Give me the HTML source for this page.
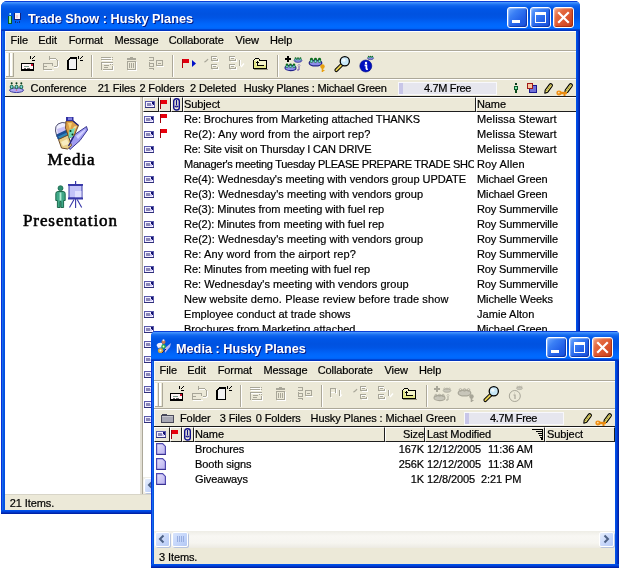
<!DOCTYPE html><html><head><meta charset="utf-8"><style>
*{margin:0;padding:0;box-sizing:border-box}
html,body{width:620px;height:569px;overflow:hidden;background:#fff}
body{will-change:transform;position:relative;font-family:"Liberation Sans",sans-serif;font-size:11px;color:#000}
.a{position:absolute}
svg{position:absolute;overflow:visible}
.t{position:absolute;white-space:pre;line-height:13px;font-size:11px;letter-spacing:-0.1px;-webkit-text-stroke:0.2px #000}
.win{position:absolute;overflow:hidden}
.tb{position:absolute;left:0;top:0;right:0;height:30px;background:linear-gradient(180deg,#0A3FD8 0px,#0A3FD8 1px,#4A9BFF 1px,#3A8CFC 2px,#2277F4 3px,#0C62EC 5px,#0056E6 8px,#0052E0 13px,#0055E5 17px,#005EF2 20px,#0066FB 23px,#006AFF 26px,#0064F8 27.5px,#0046D4 28.5px,#0034C0 29.5px,#0A3ACD 30px)}
.ttl{position:absolute;top:11px;font-weight:bold;font-size:12.7px;color:#fff;white-space:pre;line-height:15px;text-shadow:1px 1px #0A1A80;letter-spacing:0px}
.cl{position:absolute;background:#ECE9D8;overflow:hidden}
.btn{position:absolute;top:6px;width:21px;height:21px;border:1px solid #fff;border-radius:3px;
 background:linear-gradient(135deg,#6FA8FF 0%,#3A7FF5 30%,#2260E8 65%,#1A4FD6 100%);box-shadow:inset -1px -1px 1px rgba(0,20,120,.5),inset 1px 1px 1px rgba(255,255,255,.35)}
.btn.x{background:linear-gradient(135deg,#F3A78A 0%,#E4693F 30%,#D9512A 65%,#C5401C 100%);box-shadow:inset -1px -1px 1px rgba(120,20,0,.5),inset 1px 1px 1px rgba(255,255,255,.35)}
.hdr{position:absolute;height:15px;background:#ECE9D8;border-top:1px solid #fff;border-left:1px solid #fff;border-right:1px solid #1E1E1E;border-bottom:1px solid #1E1E1E}
.grip{position:absolute;width:3px;height:24px;border-left:2px solid #fff;border-right:1px solid #ACA899;border-bottom:1px solid #ACA899}
.sep{position:absolute;width:2px;height:23px;border-left:1px solid #ACA899;border-right:1px solid #fff}
.serif{position:absolute;font-family:"Liberation Serif",serif;font-size:17px;line-height:20px;white-space:pre;letter-spacing:0.9px;-webkit-text-stroke:0.55px #000}
</style></head><body>
<div class="win" style="left:1px;top:1px;width:579px;height:513px;border-radius:6px 5px 0 0;background:#0A3ACD">
<div class="tb"></div>
<div class="a" style="left:0;top:30px;bottom:0;width:4px;background:linear-gradient(90deg,#0831D9 0,#0831D9 1px,#166AEE 1px,#166AEE 2px,#0855DD 2px,#0855DD 3px,#0050E8 3px)"></div>
<div class="a" style="right:0;top:30px;bottom:0;width:4px;background:linear-gradient(270deg,#0022A8 0,#0022A8 1px,#0034C4 1px,#0034C4 2px,#0044DC 2px,#0044DC 3px,#0050E8 3px)"></div>
<div class="a" style="left:0;right:0;bottom:0;height:4px;background:linear-gradient(0deg,#0022A8 0,#0022A8 1px,#0034C4 1px,#0034C4 2px,#0044DC 2px,#0044DC 3px,#0050E8 3px)"></div>
<div class="ttl" style="left:27px">Trade Show : Husky Planes</div>
<div class="btn x" style="left:552px"></div>
<svg style="left:552px;top:6px" width="21" height="21" viewBox="0 0 21 21"><path d="M6 6 L15 15 M15 6 L6 15" stroke="#fff" stroke-width="2.2" stroke-linecap="square"/></svg>
<div class="btn" style="left:529px"></div>
<div class="a" style="left:534px;top:11px;width:11px;height:11px;background:transparent;border:1px solid #fff;border-top:3px solid #fff"></div>
<div class="btn" style="left:506px"></div>
<div class="a" style="left:511px;top:19px;width:8px;height:3px;background:#fff;"></div>
</div>
<svg style="left:7px;top:12px" width="16" height="13" viewBox="0 0 16 13" shape-rendering="crispEdges"><rect x="3" y="1" width="1" height="2" fill="#A8F4FF"/><rect x="2" y="1" width="1" height="2" fill="#5AB8E0"/><rect x="1" y="4" width="4" height="8" fill="#0A5A20"/><rect x="2" y="4" width="2" height="7" fill="#86E4A0"/><rect x="7" y="1" width="7" height="7" fill="#14207A"/><rect x="8" y="1" width="5" height="6" fill="#F8F0F8"/><rect x="9" y="3" width="2" height="3" fill="#F0D0E0"/><rect x="8" y="9" width="1" height="2" fill="#10307A"/><rect x="10" y="10" width="1" height="1" fill="#10307A"/><rect x="12" y="9" width="1" height="2" fill="#10307A"/></svg>
<div class="a" style="left:5px;top:31px;width:571px;height:479px;background:#ECE9D8;"></div>
<div class="a" style="left:5px;top:31px;width:571px;height:1px;background:#FFFFFF;"></div>
<div class="a" style="left:5px;top:31px;width:1px;height:479px;background:#F4F8FF;"></div>
<div class="t" style="left:10.6px;top:34px;">File</div>
<div class="t" style="left:38.3px;top:34px;">Edit</div>
<div class="t" style="left:68.7px;top:34px;">Format</div>
<div class="t" style="left:114.5px;top:34px;">Message</div>
<div class="t" style="left:168.7px;top:34px;">Collaborate</div>
<div class="t" style="left:235.5px;top:34px;">View</div>
<div class="t" style="left:270px;top:34px;">Help</div>
<div class="a" style="left:5px;top:50px;width:571px;height:1px;background:#ACA899;"></div>
<div class="a" style="left:5px;top:51px;width:571px;height:1px;background:#FFFFFF;"></div>
<div class="a" style="left:6px;top:53px;width:2px;height:24px;background:#FFFFFF;"></div>
<div class="a" style="left:9px;top:53px;width:1px;height:24px;background:#ACA899;"></div>
<div class="a" style="left:6px;top:76px;width:4px;height:1px;background:#ACA899;"></div>
<div class="a" style="left:10px;top:53px;width:2px;height:24px;background:#FFFFFF;"></div>
<div class="a" style="left:13px;top:53px;width:1px;height:24px;background:#ACA899;"></div>
<div class="a" style="left:10px;top:76px;width:4px;height:1px;background:#ACA899;"></div>
<div class="a" style="left:91px;top:55px;width:1px;height:22px;background:#ACA899;"></div>
<div class="a" style="left:92px;top:55px;width:1px;height:22px;background:#FFFFFF;"></div>
<div class="a" style="left:172px;top:55px;width:1px;height:22px;background:#ACA899;"></div>
<div class="a" style="left:173px;top:55px;width:1px;height:22px;background:#FFFFFF;"></div>
<div class="a" style="left:277px;top:55px;width:1px;height:22px;background:#ACA899;"></div>
<div class="a" style="left:278px;top:55px;width:1px;height:22px;background:#FFFFFF;"></div>
<div class="a" style="left:5px;top:78px;width:571px;height:1px;background:#ACA899;"></div>
<div class="a" style="left:5px;top:79px;width:571px;height:1px;background:#FFFFFF;"></div>
<div class="a" style="left:5px;top:96px;width:571px;height:1px;background:#1A1A1A;"></div>
<svg style="left:21px;top:55px" width="16" height="17" viewBox="0 0 16 17" shape-rendering="crispEdges"><rect x="0" y="8" width="13" height="8" fill="#000"/><rect x="1" y="9" width="11" height="5" fill="#FFF6F6"/><rect x="3" y="11" width="5" height="1" fill="#7A9A8A"/><rect x="3" y="13" width="2" height="1" fill="#666"/><rect x="6" y="13" width="3" height="1" fill="#666"/><rect x="10" y="9" width="2" height="2" fill="#D01030"/><rect x="9" y="1" width="1" height="3" fill="#000"/><rect x="11" y="3" width="1" height="1" fill="#000"/><rect x="12" y="2" width="1" height="1" fill="#000"/><rect x="13" y="1" width="1" height="1" fill="#000"/><rect x="11" y="5" width="3" height="1" fill="#000"/></svg>
<svg style="left:42px;top:55px" width="17" height="16" viewBox="0 0 17 16" shape-rendering="crispEdges"><rect x="1" y="8" width="10" height="1" fill="#A8A698"/><rect x="1" y="8" width="1" height="7" fill="#A8A698"/><rect x="10" y="9" width="1" height="2" fill="#A8A698"/><rect x="2" y="11" width="3" height="1" fill="#A8A698"/><rect x="1" y="14" width="9" height="1" fill="#A8A698"/><rect x="2" y="15" width="10" height="1" fill="#FFFFFF"/><rect x="7" y="1" width="1" height="4" fill="#A8A698"/><rect x="8" y="3" width="6" height="1" fill="#A8A698"/><rect x="8" y="4" width="6" height="1" fill="#FFFFFF"/><rect x="14" y="4" width="1" height="1" fill="#A8A698"/><rect x="15" y="5" width="1" height="6" fill="#A8A698"/><rect x="12" y="11" width="3" height="1" fill="#A8A698"/><rect x="16" y="6" width="1" height="6" fill="#FFFFFF"/><rect x="12" y="12" width="4" height="1" fill="#FFFFFF"/></svg>
<svg style="left:66px;top:55px" width="18" height="16" viewBox="0 0 18 16" shape-rendering="crispEdges"><path d="M1 5 L4 2 L11 2 L11 15 L1 15 Z" fill="#000"/><path d="M2.5 5.5 L4.5 3.5 L9.5 3.5 L9.5 13.5 L2.5 13.5 Z" fill="#F2F2F2"/><rect x="12" y="1" width="1" height="3" fill="#000"/><rect x="14" y="3" width="1" height="1" fill="#000"/><rect x="15" y="2" width="1" height="1" fill="#000"/><rect x="16" y="1" width="1" height="1" fill="#000"/><rect x="14" y="5" width="3" height="1" fill="#000"/></svg>
<svg style="left:100px;top:56px" width="15" height="16" viewBox="0 0 15 16" shape-rendering="crispEdges"><rect x="1" y="1" width="10" height="1" fill="#A8A698"/><rect x="2" y="2" width="10" height="1" fill="#FFFFFF"/><rect x="12" y="1" width="1" height="1" fill="#A8A698"/><rect x="1" y="3" width="10" height="1" fill="#A8A698"/><rect x="2" y="4" width="10" height="1" fill="#FFFFFF"/><rect x="12" y="3" width="1" height="1" fill="#A8A698"/><rect x="1" y="6" width="12" height="1" fill="#A8A698"/><rect x="1" y="6" width="1" height="8" fill="#A8A698"/><rect x="2" y="7" width="11" height="1" fill="#FFFFFF"/><rect x="3" y="13" width="10" height="1" fill="#A8A698"/><rect x="12" y="10" width="1" height="4" fill="#A8A698"/><rect x="10" y="8" width="1" height="1" fill="#A8A698"/><rect x="12" y="8" width="1" height="1" fill="#A8A698"/><rect x="4" y="9" width="5" height="1" fill="#A8A698"/><rect x="4" y="11" width="4" height="1" fill="#A8A698"/><rect x="3" y="14" width="11" height="1" fill="#FFFFFF"/><rect x="13" y="10" width="1" height="4" fill="#FFFFFF"/></svg>
<svg style="left:126px;top:56px" width="12" height="16" viewBox="0 0 12 16" shape-rendering="crispEdges"><rect x="4" y="1" width="3" height="1" fill="#A8A698"/><rect x="1" y="2" width="9" height="2" fill="#A8A698"/><rect x="1" y="5" width="9" height="1" fill="#A8A698"/><rect x="1" y="5" width="1" height="9" fill="#A8A698"/><rect x="9" y="5" width="1" height="9" fill="#A8A698"/><rect x="1" y="13" width="9" height="1" fill="#A8A698"/><rect x="3" y="7" width="1" height="5" fill="#A8A698"/><rect x="5" y="7" width="1" height="5" fill="#A8A698"/><rect x="7" y="7" width="1" height="5" fill="#A8A698"/><rect x="2" y="14" width="9" height="1" fill="#FFFFFF"/><rect x="10" y="6" width="1" height="8" fill="#FFFFFF"/></svg>
<svg style="left:148px;top:56px" width="17" height="16" viewBox="0 0 17 16" shape-rendering="crispEdges"><rect x="1" y="1" width="5" height="1" fill="#A8A698"/><rect x="5" y="2" width="1" height="2" fill="#A8A698"/><rect x="1" y="4" width="5" height="1" fill="#A8A698"/><rect x="1" y="6" width="1" height="5" fill="#A8A698"/><rect x="1" y="7" width="5" height="1" fill="#A8A698"/><rect x="5" y="8" width="1" height="2" fill="#A8A698"/><rect x="1" y="10" width="5" height="1" fill="#A8A698"/><rect x="1" y="12" width="5" height="1" fill="#A8A698"/><rect x="5" y="13" width="1" height="1" fill="#A8A698"/><rect x="8" y="4" width="7" height="6" fill="#A8A698"/><rect x="9" y="5" width="5" height="4" fill="#ECE9D8"/><rect x="10" y="7" width="3" height="1" fill="#A8A698"/><rect x="9" y="10" width="7" height="1" fill="#FFFFFF"/></svg>
<svg style="left:181px;top:58px" width="17" height="11" viewBox="0 0 17 11" shape-rendering="crispEdges"><rect x="1" y="1" width="7" height="4" fill="#E00010"/><rect x="1" y="1" width="1" height="9" fill="#B0000C"/><path d="M11 2 L15 5.5 L11 9 Z" fill="#0010C8" shape-rendering="auto"/></svg>
<svg style="left:203px;top:55px" width="17" height="16" viewBox="0 0 17 16" shape-rendering="crispEdges"><rect x="8" y="1" width="6" height="1" fill="#A8A698"/><rect x="8" y="1" width="1" height="5" fill="#A8A698"/><rect x="10" y="3" width="3" height="1" fill="#A8A698"/><rect x="9" y="5" width="6" height="1" fill="#A8A698"/><rect x="14" y="4" width="1" height="2" fill="#A8A698"/><rect x="9" y="2" width="5" height="1" fill="#FFFFFF"/><rect x="10" y="6" width="6" height="1" fill="#FFFFFF"/><rect x="15" y="4" width="1" height="3" fill="#FFFFFF"/><rect x="8" y="9" width="6" height="1" fill="#A8A698"/><rect x="8" y="9" width="1" height="5" fill="#A8A698"/><rect x="10" y="11" width="3" height="1" fill="#A8A698"/><rect x="9" y="13" width="6" height="1" fill="#A8A698"/><rect x="14" y="12" width="1" height="2" fill="#A8A698"/><rect x="9" y="10" width="5" height="1" fill="#FFFFFF"/><rect x="10" y="14" width="6" height="1" fill="#FFFFFF"/><rect x="15" y="12" width="1" height="3" fill="#FFFFFF"/><path d="M1.5 7 Q3.5 6.5 5 4" stroke="#A8A698" stroke-width="1.3" fill="none" shape-rendering="auto"/></svg>
<svg style="left:228px;top:55px" width="17" height="16" viewBox="0 0 17 16" shape-rendering="crispEdges"><rect x="1" y="1" width="6" height="1" fill="#A8A698"/><rect x="1" y="1" width="1" height="5" fill="#A8A698"/><rect x="3" y="3" width="3" height="1" fill="#A8A698"/><rect x="2" y="5" width="6" height="1" fill="#A8A698"/><rect x="7" y="4" width="1" height="2" fill="#A8A698"/><rect x="2" y="2" width="5" height="1" fill="#FFFFFF"/><rect x="3" y="6" width="6" height="1" fill="#FFFFFF"/><rect x="8" y="4" width="1" height="3" fill="#FFFFFF"/><rect x="1" y="9" width="6" height="1" fill="#A8A698"/><rect x="1" y="9" width="1" height="5" fill="#A8A698"/><rect x="3" y="11" width="3" height="1" fill="#A8A698"/><rect x="2" y="13" width="6" height="1" fill="#A8A698"/><rect x="7" y="12" width="1" height="2" fill="#A8A698"/><rect x="2" y="10" width="5" height="1" fill="#FFFFFF"/><rect x="3" y="14" width="6" height="1" fill="#FFFFFF"/><rect x="8" y="12" width="1" height="3" fill="#FFFFFF"/><rect x="11" y="5" width="1" height="6" fill="#A8A698"/><rect x="12" y="5" width="1" height="6" fill="#FFFFFF"/><path d="M13 12 L16 8.5" stroke="#FFFFFF" stroke-width="1.3" shape-rendering="auto"/></svg>
<svg style="left:252px;top:57px" width="17" height="13" viewBox="0 0 17 13" shape-rendering="crispEdges"><path d="M1 3 L3 1 L7 1 L8 3 L15 3 L15 12 L1 12 Z" fill="#000"/><path d="M2 3.6 L3.5 2 L6.5 2 L7.5 4 L14 4 L14 11 L2 11 Z" fill="#F4F4C8"/><rect x="2" y="8" width="12" height="3" fill="#E4E88A"/><rect x="2" y="4" width="2" height="7" fill="#E4E88A"/><rect x="5" y="4" width="1" height="5" fill="#000"/><rect x="4" y="5" width="3" height="1" fill="#000"/><rect x="5" y="8" width="7" height="1" fill="#000"/><rect x="2" y="12" width="14" height="1" fill="#55553A" opacity=".6"/></svg>
<svg style="left:285px;top:56px" width="18" height="16" viewBox="0 0 18 16"><rect x="2" y="0" width="2" height="6" fill="#000" shape-rendering="crispEdges"/><rect x="0" y="2" width="6" height="2" fill="#000" shape-rendering="crispEdges"/><ellipse cx="13" cy="4.5" rx="3.8499999999999996" ry="1.8199999999999998" fill="#8C8CE8" stroke="#23238C" stroke-width="0.77"/><circle cx="10.55" cy="2.2600000000000002" r="0.9099999999999999" fill="#0B6B1A"/><circle cx="10.55" cy="3.38" r="0.84" fill="#7CD8E8" stroke="#0B6B1A" stroke-width="0.42"/><circle cx="13.0" cy="2.2600000000000002" r="0.9099999999999999" fill="#0B6B1A"/><circle cx="13.0" cy="3.38" r="0.84" fill="#7CD8E8" stroke="#0B6B1A" stroke-width="0.42"/><circle cx="15.45" cy="2.2600000000000002" r="0.9099999999999999" fill="#0B6B1A"/><circle cx="15.45" cy="3.38" r="0.84" fill="#7CD8E8" stroke="#0B6B1A" stroke-width="0.42"/><ellipse cx="5.5" cy="12" rx="5.5" ry="2.6" fill="#8C8CE8" stroke="#23238C" stroke-width="1.1"/><circle cx="2.0" cy="8.8" r="1.3" fill="#0B6B1A"/><circle cx="2.0" cy="10.4" r="1.2" fill="#7CD8E8" stroke="#0B6B1A" stroke-width="0.6"/><circle cx="5.5" cy="8.8" r="1.3" fill="#0B6B1A"/><circle cx="5.5" cy="10.4" r="1.2" fill="#7CD8E8" stroke="#0B6B1A" stroke-width="0.6"/><circle cx="9.0" cy="8.8" r="1.3" fill="#0B6B1A"/><circle cx="9.0" cy="10.4" r="1.2" fill="#7CD8E8" stroke="#0B6B1A" stroke-width="0.6"/><path d="M12 14 L14 14 L14 10 M13 9.5 L14 8.5 L15 9.5" stroke="#7050B0" stroke-width="1" fill="none"/></svg>
<svg style="left:309px;top:56px" width="18" height="16" viewBox="0 0 18 16"><ellipse cx="6.5" cy="7" rx="6.324999999999999" ry="2.9899999999999998" fill="#8C8CE8" stroke="#23238C" stroke-width="1.265"/><circle cx="2.4750000000000005" cy="3.3200000000000003" r="1.4949999999999999" fill="#0B6B1A"/><circle cx="2.4750000000000005" cy="5.16" r="1.38" fill="#7CD8E8" stroke="#0B6B1A" stroke-width="0.69"/><circle cx="6.5" cy="3.3200000000000003" r="1.4949999999999999" fill="#0B6B1A"/><circle cx="6.5" cy="5.16" r="1.38" fill="#7CD8E8" stroke="#0B6B1A" stroke-width="0.69"/><circle cx="10.524999999999999" cy="3.3200000000000003" r="1.4949999999999999" fill="#0B6B1A"/><circle cx="10.524999999999999" cy="5.16" r="1.38" fill="#7CD8E8" stroke="#0B6B1A" stroke-width="0.69"/><circle cx="13.5" cy="10.5" r="2.2" fill="#E8A010"/><rect x="12.7" y="12" width="1.6" height="4" fill="#E8A010"/><rect x="14" y="14" width="1.5" height="1" fill="#E8A010"/></svg>
<svg style="left:334px;top:55px" width="17" height="17" viewBox="0 0 17 17"><path d="M2.3 15.2 L7.5 10" stroke="#000" stroke-width="3.8" stroke-linecap="round"/><path d="M2.3 15.2 L7.5 10" stroke="#E8D050" stroke-width="1.8" stroke-linecap="round"/><circle cx="10.8" cy="6.2" r="4.6" fill="#C8E8F8" stroke="#000" stroke-width="1.3"/><circle cx="9.8" cy="5.2" r="1.6" fill="#fff" opacity=".8"/></svg>
<svg style="left:359px;top:55px" width="17" height="17" viewBox="0 0 17 17"><circle cx="6.8" cy="11" r="6" fill="#0010C0" stroke="#000A80" stroke-width=".6"/><circle cx="7" cy="8" r="1.2" fill="#fff"/><path d="M5.6 10.4 L7.4 10.4 L7.4 13.6 Q7.6 14.4 8.8 14" stroke="#fff" stroke-width="1.7" fill="none"/><ellipse cx="11.5" cy="3.2" rx="3.0250000000000004" ry="1.4300000000000002" fill="#8C8CE8" stroke="#23238C" stroke-width="0.6050000000000001"/><circle cx="9.575" cy="1.44" r="0.7150000000000001" fill="#0B6B1A"/><circle cx="9.575" cy="2.3200000000000003" r="0.66" fill="#7CD8E8" stroke="#0B6B1A" stroke-width="0.33"/><circle cx="11.5" cy="1.44" r="0.7150000000000001" fill="#0B6B1A"/><circle cx="11.5" cy="2.3200000000000003" r="0.66" fill="#7CD8E8" stroke="#0B6B1A" stroke-width="0.33"/><circle cx="13.425" cy="1.44" r="0.7150000000000001" fill="#0B6B1A"/><circle cx="13.425" cy="2.3200000000000003" r="0.66" fill="#7CD8E8" stroke="#0B6B1A" stroke-width="0.33"/></svg>
<svg style="left:9px;top:82px" width="16" height="12" viewBox="0 0 16 12"><ellipse cx="7.5" cy="8.2" rx="7" ry="2.3" fill="#B0A8F4" stroke="#3A3AA0" stroke-width="1"/><circle cx="7.5" cy="8.2" r=".8" fill="#E06080"/><circle cx="2.7" cy="1.3" r="1" fill="#083818"/><ellipse cx="2.7" cy="4.9" rx="1.5" ry="1.8" fill="#7ED0E0" stroke="#0A5A2A" stroke-width=".9"/><circle cx="7.5" cy="1.3" r="1" fill="#083818"/><ellipse cx="7.5" cy="4.9" rx="1.5" ry="1.8" fill="#7ED0E0" stroke="#0A5A2A" stroke-width=".9"/><circle cx="12.3" cy="1.3" r="1" fill="#083818"/><ellipse cx="12.3" cy="4.9" rx="1.5" ry="1.8" fill="#7ED0E0" stroke="#0A5A2A" stroke-width=".9"/></svg>
<div class="t" style="left:30.6px;top:82px;">Conference</div>
<div class="t" style="left:97.7px;top:82px;">21 Files</div>
<div class="t" style="left:139.4px;top:82px;">2 Folders</div>
<div class="t" style="left:190px;top:82px;">2 Deleted</div>
<div class="t" style="left:243.8px;top:82px;letter-spacing:-0.18px">Husky Planes : Michael Green</div>
<div class="a" style="left:398px;top:82px;width:99px;height:13px;background:#E6E6EE;border:1px solid #F8F8FC"></div>
<div class="a" style="left:399px;top:83px;width:4px;height:11px;background:#C8C6E8;"></div>
<div class="t" style="left:424px;top:82px;letter-spacing:-0.35px">4.7M Free</div>
<svg style="left:514px;top:83px" width="6" height="11" viewBox="0 0 6 11" shape-rendering="crispEdges"><rect x="1" y="0" width="2" height="2" fill="#0A3A1A"/><rect x="0" y="3" width="4" height="4" fill="#0A5A2A"/><rect x="1" y="4" width="2" height="2" fill="#8AE8B0"/><rect x="1" y="7" width="2" height="3" fill="#0A4A1A"/></svg>
<svg style="left:527px;top:83px" width="12" height="11" viewBox="0 0 12 11" shape-rendering="crispEdges"><rect x="2" y="2" width="8" height="8" fill="#1A1A90"/><rect x="3" y="3" width="6" height="6" fill="#7070D8"/><rect x="0" y="0" width="6" height="6" fill="#A01818"/><rect x="1" y="1" width="4" height="4" fill="#F8C8A0"/></svg>
<svg style="left:544px;top:83px" width="9" height="11" viewBox="0 0 9 11"><path d="M0.8 10.2 L1.2 7 L5.6 1.2 Q6.6 0.2 7.6 1 L8.2 1.6 Q8.8 2.6 8 3.5 L3.8 9.2 Z" fill="#EEE070" stroke="#000" stroke-width="1.1" stroke-linejoin="round"/><path d="M2.6 7.6 L6.6 2.4" stroke="#303000" stroke-width=".8" stroke-dasharray="1 1"/></svg>
<svg style="left:556px;top:83px" width="17" height="13" viewBox="0 0 17 13"><path d="M8.8 10.2 L9.2 7 L13.6 1.2 Q14.6 0.2 15.6 1 L16.2 1.6 Q16.8 2.6 16 3.5 L11.8 9.2 Z" fill="#EEE070" stroke="#000" stroke-width="1.1" stroke-linejoin="round"/><path d="M10.6 7.6 L14.6 2.4" stroke="#303000" stroke-width=".8" stroke-dasharray="1 1"/><ellipse cx="3" cy="10" rx="2.6" ry="2.4" fill="#F09018"/><rect x="4" y="8.8" width="7" height="2.4" fill="#E88A10"/><rect x="7.5" y="10.5" width="2" height="2.5" fill="#E88A10"/><circle cx="2.8" cy="9.6" r=".9" fill="#FFE0A0"/></svg>
<div class="a" style="left:5px;top:97px;width:135px;height:397px;background:#FFFFFF;"></div>
<div class="a" style="left:140px;top:97px;width:2px;height:397px;background:#E2DFD4;"></div>
<div class="a" style="left:142px;top:97px;width:1px;height:397px;background:#ACA899;"></div>
<svg style="left:50px;top:112px" width="40" height="40" viewBox="50 112 40 40"><path d="M67.5 146 L74 135 L86.5 126.5 L87.5 130 L80 140.5 L70 149.5 Z" fill="#A09CF2" stroke="#3A3890" stroke-width="1"/><path d="M76 136 L85.5 129 L85 131 L78 139 Z" fill="#D0D0FF"/><path d="M55.5 131 Q55 126 58 124 Q62 121.5 66.5 123 L67 132 L57 137 Z" fill="#EEEEFF" stroke="#505070" stroke-width="1"/><path d="M57 129 L66 126 L66.5 131 L58 135 Z" fill="#C8C0F4"/><path d="M56.5 134.5 L67 129.5 L71 133 L60.5 140.5 L57.5 139 Z" fill="#1C4E94"/><path d="M58 136.5 L67 132.5 L68 134.5 L60 139 Z" fill="#2E86B8"/><path d="M58.5 139.5 L68 135 L71.5 145.5 L67.5 149 L61.5 148 Z" fill="#EAD08A" stroke="#6A4A28" stroke-width="1"/><path d="M61 142 L67 139 L69 144 L63 146 Z" fill="#F8ECC0"/><path d="M66 121 L73.5 121 L78.5 125.5 L74 136 L69 138 L65.5 128 Z" fill="#DDA048" stroke="#5A3810" stroke-width=".8"/><path d="M68 123 L72 123 L70 130 Z" fill="#F8D070"/><path d="M74 126.5 L77 126 L73 133 L71 132 Z" fill="#F0E0A0"/><path d="M69 130 L75 128 L73 137 L68.5 138 Z" fill="#70D8B8"/><circle cx="70.5" cy="131" r="1" fill="#0A3A10"/><circle cx="72.5" cy="134.5" r="1" fill="#0A3A10"/><path d="M73 121 L78.5 125.5 M74 136 L68.5 146" stroke="#20207A" stroke-width="1.3" fill="none"/><rect x="66" y="117" width="7.5" height="4" fill="#3030A0"/><rect x="68" y="117.5" width="4" height="2.5" fill="#8080E0"/></svg>
<div class="serif" style="left:47.5px;top:150px">Media</div>
<svg style="left:55px;top:181px" width="30" height="28" viewBox="0 0 30 28"><circle cx="5.5" cy="7.2" r="2.5" fill="#2E8E70" stroke="#0E5E40" stroke-width=".7"/><path d="M0.8 12.5 Q0.8 10.5 3 10.5 L8 10.5 Q10.2 10.5 10.2 12.5 L10.2 19.5 L8.6 19.5 L8.6 26.5 L5.9 26.5 L5.9 20.5 L5.1 20.5 L5.1 26.5 L2.4 26.5 L2.4 19.5 L0.8 19.5 Z" fill="#40A888" stroke="#0E5E40" stroke-width=".9"/><rect x="4.6" y="11.5" width="1.8" height="8" fill="#B0ECD8"/><rect x="20" y="0" width="1.2" height="3.5" fill="#3838A8"/><rect x="13" y="3" width="15" height="1.8" fill="#3838A8"/><rect x="14" y="4.5" width="13" height="12.5" fill="#C4C4F8" stroke="#3838A8" stroke-width="1"/><rect x="20" y="10" width="6.5" height="6.5" fill="#E8E8FF" opacity=".8"/><rect x="13" y="16.5" width="15" height="2" fill="#3838A8"/><path d="M20.6 18 L20.6 27 M19 18.5 L14.5 26.5 M22.2 18.5 L26.7 26.5" stroke="#3838A8" stroke-width="1.1"/></svg>
<div class="serif" style="left:23px;top:211px">Presentation</div>
<div class="a" style="left:143px;top:97px;width:433px;height:397px;background:#FFFFFF;"></div>
<div class="hdr" style="left:143px;top:97px;width:16px;"></div>
<div class="hdr" style="left:159px;top:97px;width:12px;"></div>
<div class="hdr" style="left:171px;top:97px;width:12px;"></div>
<div class="hdr" style="left:183px;top:97px;width:293px;"></div>
<div class="hdr" style="left:476px;top:97px;width:100px;border-right:none"></div>
<svg style="left:145px;top:101px" width="10" height="7" viewBox="0 0 10 7" shape-rendering="crispEdges"><rect x="0" y="0" width="10" height="7" fill="#5C5CAC"/><rect x="1" y="1" width="8" height="5" fill="#F4F0FF"/><rect x="2" y="2" width="4" height="3" fill="#8A88B8"/><rect x="6" y="3" width="2" height="2" fill="#C8C0F0"/><rect x="7" y="1" width="2" height="2" fill="#101070"/><rect x="8" y="3" width="1" height="1" fill="#101070"/><rect x="0" y="6" width="10" height="1" fill="#30307A"/></svg>
<svg style="left:160px;top:100px" width="7" height="9" viewBox="0 0 7 9" shape-rendering="crispEdges"><rect x="0" y="0" width="7" height="4" fill="#E8000C"/><rect x="0" y="0" width="1" height="9" fill="#A0000A"/></svg>
<svg style="left:173px;top:98px" width="8" height="13" viewBox="0 0 8 13"><rect x="0.7" y="0.7" width="5.6" height="11.3" rx="2.6" fill="none" stroke="#10108C" stroke-width="1.4"/><path d="M3.5 2 L3.5 7.5 M1.8 7.8 Q3.5 10 5.2 7.8" stroke="#10108C" stroke-width="1.2" fill="none"/></svg>
<div class="t" style="left:184px;top:98px;">Subject</div>
<div class="t" style="left:477px;top:98px;">Name</div>
<svg style="left:144px;top:116px" width="10" height="7" viewBox="0 0 10 7" shape-rendering="crispEdges"><rect x="0" y="0" width="10" height="7" fill="#5C5CAC"/><rect x="1" y="1" width="8" height="5" fill="#F4F0FF"/><rect x="2" y="2" width="4" height="3" fill="#8A88B8"/><rect x="6" y="3" width="2" height="2" fill="#C8C0F0"/><rect x="7" y="1" width="2" height="2" fill="#101070"/><rect x="8" y="3" width="1" height="1" fill="#101070"/><rect x="0" y="6" width="10" height="1" fill="#30307A"/></svg>
<svg style="left:160px;top:114px" width="7" height="9" viewBox="0 0 7 9" shape-rendering="crispEdges"><rect x="0" y="0" width="7" height="4" fill="#E8000C"/><rect x="0" y="0" width="1" height="9" fill="#A0000A"/></svg>
<div class="a" style="left:184px;top:111px;width:290px;height:15px;overflow:hidden">
<div class="t" style="left:0px;top:2px;letter-spacing:-0.08px">Re: Brochures from Marketing attached THANKS</div></div>
<div class="t" style="left:477px;top:113px;letter-spacing:0.14px">Melissa Stewart</div>
<svg style="left:144px;top:131px" width="10" height="7" viewBox="0 0 10 7" shape-rendering="crispEdges"><rect x="0" y="0" width="10" height="7" fill="#5C5CAC"/><rect x="1" y="1" width="8" height="5" fill="#F4F0FF"/><rect x="2" y="2" width="4" height="3" fill="#8A88B8"/><rect x="6" y="3" width="2" height="2" fill="#C8C0F0"/><rect x="7" y="1" width="2" height="2" fill="#101070"/><rect x="8" y="3" width="1" height="1" fill="#101070"/><rect x="0" y="6" width="10" height="1" fill="#30307A"/></svg>
<svg style="left:160px;top:129px" width="7" height="9" viewBox="0 0 7 9" shape-rendering="crispEdges"><rect x="0" y="0" width="7" height="4" fill="#E8000C"/><rect x="0" y="0" width="1" height="9" fill="#A0000A"/></svg>
<div class="a" style="left:184px;top:126px;width:290px;height:15px;overflow:hidden">
<div class="t" style="left:0px;top:2px;letter-spacing:0.13px">Re(2): Any word from the airport rep?</div></div>
<div class="t" style="left:477px;top:128px;letter-spacing:0.14px">Melissa Stewart</div>
<svg style="left:144px;top:146px" width="10" height="7" viewBox="0 0 10 7" shape-rendering="crispEdges"><rect x="0" y="0" width="10" height="7" fill="#5C5CAC"/><rect x="1" y="1" width="8" height="5" fill="#F4F0FF"/><rect x="2" y="2" width="4" height="3" fill="#8A88B8"/><rect x="6" y="3" width="2" height="2" fill="#C8C0F0"/><rect x="7" y="1" width="2" height="2" fill="#101070"/><rect x="8" y="3" width="1" height="1" fill="#101070"/><rect x="0" y="6" width="10" height="1" fill="#30307A"/></svg>
<div class="a" style="left:184px;top:141px;width:290px;height:15px;overflow:hidden">
<div class="t" style="left:0px;top:2px;letter-spacing:-0.18px">Re: Site visit on Thursday I CAN DRIVE</div></div>
<div class="t" style="left:477px;top:143px;letter-spacing:0.14px">Melissa Stewart</div>
<svg style="left:144px;top:161px" width="10" height="7" viewBox="0 0 10 7" shape-rendering="crispEdges"><rect x="0" y="0" width="10" height="7" fill="#5C5CAC"/><rect x="1" y="1" width="8" height="5" fill="#F4F0FF"/><rect x="2" y="2" width="4" height="3" fill="#8A88B8"/><rect x="6" y="3" width="2" height="2" fill="#C8C0F0"/><rect x="7" y="1" width="2" height="2" fill="#101070"/><rect x="8" y="3" width="1" height="1" fill="#101070"/><rect x="0" y="6" width="10" height="1" fill="#30307A"/></svg>
<div class="a" style="left:184px;top:156px;width:290px;height:15px;overflow:hidden">
<div class="t" style="left:0px;top:2px;letter-spacing:-0.27px">Manager&#x27;s meeting Tuesday PLEASE PREPARE TRADE SHOW</div></div>
<div class="t" style="left:477px;top:158px;letter-spacing:0.15px">Roy Allen</div>
<svg style="left:144px;top:176px" width="10" height="7" viewBox="0 0 10 7" shape-rendering="crispEdges"><rect x="0" y="0" width="10" height="7" fill="#5C5CAC"/><rect x="1" y="1" width="8" height="5" fill="#F4F0FF"/><rect x="2" y="2" width="4" height="3" fill="#8A88B8"/><rect x="6" y="3" width="2" height="2" fill="#C8C0F0"/><rect x="7" y="1" width="2" height="2" fill="#101070"/><rect x="8" y="3" width="1" height="1" fill="#101070"/><rect x="0" y="6" width="10" height="1" fill="#30307A"/></svg>
<div class="a" style="left:184px;top:171px;width:290px;height:15px;overflow:hidden">
<div class="t" style="left:0px;top:2px;letter-spacing:-0.04px">Re(4): Wednesday&#x27;s meeting with vendors group UPDATE</div></div>
<div class="t" style="left:477px;top:173px;letter-spacing:-0.08px">Michael Green</div>
<svg style="left:144px;top:191px" width="10" height="7" viewBox="0 0 10 7" shape-rendering="crispEdges"><rect x="0" y="0" width="10" height="7" fill="#5C5CAC"/><rect x="1" y="1" width="8" height="5" fill="#F4F0FF"/><rect x="2" y="2" width="4" height="3" fill="#8A88B8"/><rect x="6" y="3" width="2" height="2" fill="#C8C0F0"/><rect x="7" y="1" width="2" height="2" fill="#101070"/><rect x="8" y="3" width="1" height="1" fill="#101070"/><rect x="0" y="6" width="10" height="1" fill="#30307A"/></svg>
<div class="a" style="left:184px;top:186px;width:290px;height:15px;overflow:hidden">
<div class="t" style="left:0px;top:2px;letter-spacing:0.04px">Re(3): Wednesday&#x27;s meeting with vendors group</div></div>
<div class="t" style="left:477px;top:188px;letter-spacing:-0.08px">Michael Green</div>
<svg style="left:144px;top:206px" width="10" height="7" viewBox="0 0 10 7" shape-rendering="crispEdges"><rect x="0" y="0" width="10" height="7" fill="#5C5CAC"/><rect x="1" y="1" width="8" height="5" fill="#F4F0FF"/><rect x="2" y="2" width="4" height="3" fill="#8A88B8"/><rect x="6" y="3" width="2" height="2" fill="#C8C0F0"/><rect x="7" y="1" width="2" height="2" fill="#101070"/><rect x="8" y="3" width="1" height="1" fill="#101070"/><rect x="0" y="6" width="10" height="1" fill="#30307A"/></svg>
<div class="a" style="left:184px;top:201px;width:290px;height:15px;overflow:hidden">
<div class="t" style="left:0px;top:2px;letter-spacing:-0.04px">Re(3): Minutes from meeting with fuel rep</div></div>
<div class="t" style="left:477px;top:203px;letter-spacing:-0.15px">Roy Summerville</div>
<svg style="left:144px;top:221px" width="10" height="7" viewBox="0 0 10 7" shape-rendering="crispEdges"><rect x="0" y="0" width="10" height="7" fill="#5C5CAC"/><rect x="1" y="1" width="8" height="5" fill="#F4F0FF"/><rect x="2" y="2" width="4" height="3" fill="#8A88B8"/><rect x="6" y="3" width="2" height="2" fill="#C8C0F0"/><rect x="7" y="1" width="2" height="2" fill="#101070"/><rect x="8" y="3" width="1" height="1" fill="#101070"/><rect x="0" y="6" width="10" height="1" fill="#30307A"/></svg>
<div class="a" style="left:184px;top:216px;width:290px;height:15px;overflow:hidden">
<div class="t" style="left:0px;top:2px;letter-spacing:-0.04px">Re(2): Minutes from meeting with fuel rep</div></div>
<div class="t" style="left:477px;top:218px;letter-spacing:-0.15px">Roy Summerville</div>
<svg style="left:144px;top:236px" width="10" height="7" viewBox="0 0 10 7" shape-rendering="crispEdges"><rect x="0" y="0" width="10" height="7" fill="#5C5CAC"/><rect x="1" y="1" width="8" height="5" fill="#F4F0FF"/><rect x="2" y="2" width="4" height="3" fill="#8A88B8"/><rect x="6" y="3" width="2" height="2" fill="#C8C0F0"/><rect x="7" y="1" width="2" height="2" fill="#101070"/><rect x="8" y="3" width="1" height="1" fill="#101070"/><rect x="0" y="6" width="10" height="1" fill="#30307A"/></svg>
<div class="a" style="left:184px;top:231px;width:290px;height:15px;overflow:hidden">
<div class="t" style="left:0px;top:2px;letter-spacing:0.04px">Re(2): Wednesday&#x27;s meeting with vendors group</div></div>
<div class="t" style="left:477px;top:233px;letter-spacing:-0.15px">Roy Summerville</div>
<svg style="left:144px;top:251px" width="10" height="7" viewBox="0 0 10 7" shape-rendering="crispEdges"><rect x="0" y="0" width="10" height="7" fill="#5C5CAC"/><rect x="1" y="1" width="8" height="5" fill="#F4F0FF"/><rect x="2" y="2" width="4" height="3" fill="#8A88B8"/><rect x="6" y="3" width="2" height="2" fill="#C8C0F0"/><rect x="7" y="1" width="2" height="2" fill="#101070"/><rect x="8" y="3" width="1" height="1" fill="#101070"/><rect x="0" y="6" width="10" height="1" fill="#30307A"/></svg>
<div class="a" style="left:184px;top:246px;width:290px;height:15px;overflow:hidden">
<div class="t" style="left:0px;top:2px;letter-spacing:0.11px">Re: Any word from the airport rep?</div></div>
<div class="t" style="left:477px;top:248px;letter-spacing:-0.15px">Roy Summerville</div>
<svg style="left:144px;top:266px" width="10" height="7" viewBox="0 0 10 7" shape-rendering="crispEdges"><rect x="0" y="0" width="10" height="7" fill="#5C5CAC"/><rect x="1" y="1" width="8" height="5" fill="#F4F0FF"/><rect x="2" y="2" width="4" height="3" fill="#8A88B8"/><rect x="6" y="3" width="2" height="2" fill="#C8C0F0"/><rect x="7" y="1" width="2" height="2" fill="#101070"/><rect x="8" y="3" width="1" height="1" fill="#101070"/><rect x="0" y="6" width="10" height="1" fill="#30307A"/></svg>
<div class="a" style="left:184px;top:261px;width:290px;height:15px;overflow:hidden">
<div class="t" style="left:0px;top:2px;letter-spacing:-0.06px">Re: Minutes from meeting with fuel rep</div></div>
<div class="t" style="left:477px;top:263px;letter-spacing:-0.15px">Roy Summerville</div>
<svg style="left:144px;top:281px" width="10" height="7" viewBox="0 0 10 7" shape-rendering="crispEdges"><rect x="0" y="0" width="10" height="7" fill="#5C5CAC"/><rect x="1" y="1" width="8" height="5" fill="#F4F0FF"/><rect x="2" y="2" width="4" height="3" fill="#8A88B8"/><rect x="6" y="3" width="2" height="2" fill="#C8C0F0"/><rect x="7" y="1" width="2" height="2" fill="#101070"/><rect x="8" y="3" width="1" height="1" fill="#101070"/><rect x="0" y="6" width="10" height="1" fill="#30307A"/></svg>
<div class="a" style="left:184px;top:276px;width:290px;height:15px;overflow:hidden">
<div class="t" style="left:0px;top:2px;letter-spacing:0.02px">Re: Wednesday&#x27;s meeting with vendors group</div></div>
<div class="t" style="left:477px;top:278px;letter-spacing:-0.15px">Roy Summerville</div>
<svg style="left:144px;top:296px" width="10" height="7" viewBox="0 0 10 7" shape-rendering="crispEdges"><rect x="0" y="0" width="10" height="7" fill="#5C5CAC"/><rect x="1" y="1" width="8" height="5" fill="#F4F0FF"/><rect x="2" y="2" width="4" height="3" fill="#8A88B8"/><rect x="6" y="3" width="2" height="2" fill="#C8C0F0"/><rect x="7" y="1" width="2" height="2" fill="#101070"/><rect x="8" y="3" width="1" height="1" fill="#101070"/><rect x="0" y="6" width="10" height="1" fill="#30307A"/></svg>
<div class="a" style="left:184px;top:291px;width:290px;height:15px;overflow:hidden">
<div class="t" style="left:0px;top:2px;letter-spacing:0.12px">New website demo. Please review before trade show</div></div>
<div class="t" style="left:477px;top:293px;letter-spacing:-0.06px">Michelle Weeks</div>
<svg style="left:144px;top:311px" width="10" height="7" viewBox="0 0 10 7" shape-rendering="crispEdges"><rect x="0" y="0" width="10" height="7" fill="#5C5CAC"/><rect x="1" y="1" width="8" height="5" fill="#F4F0FF"/><rect x="2" y="2" width="4" height="3" fill="#8A88B8"/><rect x="6" y="3" width="2" height="2" fill="#C8C0F0"/><rect x="7" y="1" width="2" height="2" fill="#101070"/><rect x="8" y="3" width="1" height="1" fill="#101070"/><rect x="0" y="6" width="10" height="1" fill="#30307A"/></svg>
<div class="a" style="left:184px;top:306px;width:290px;height:15px;overflow:hidden">
<div class="t" style="left:0px;top:2px;letter-spacing:0.05px">Employee conduct at trade shows</div></div>
<div class="t" style="left:477px;top:308px;letter-spacing:0.05px">Jamie Alton</div>
<svg style="left:144px;top:326px" width="10" height="7" viewBox="0 0 10 7" shape-rendering="crispEdges"><rect x="0" y="0" width="10" height="7" fill="#5C5CAC"/><rect x="1" y="1" width="8" height="5" fill="#F4F0FF"/><rect x="2" y="2" width="4" height="3" fill="#8A88B8"/><rect x="6" y="3" width="2" height="2" fill="#C8C0F0"/><rect x="7" y="1" width="2" height="2" fill="#101070"/><rect x="8" y="3" width="1" height="1" fill="#101070"/><rect x="0" y="6" width="10" height="1" fill="#30307A"/></svg>
<div class="a" style="left:184px;top:321px;width:290px;height:15px;overflow:hidden">
<div class="t" style="left:0px;top:2px;letter-spacing:-0.01px">Brochures from Marketing attached</div></div>
<div class="t" style="left:477px;top:323px;letter-spacing:-0.08px">Michael Green</div>
<svg style="left:144px;top:341px" width="10" height="7" viewBox="0 0 10 7" shape-rendering="crispEdges"><rect x="0" y="0" width="10" height="7" fill="#5C5CAC"/><rect x="1" y="1" width="8" height="5" fill="#F4F0FF"/><rect x="2" y="2" width="4" height="3" fill="#8A88B8"/><rect x="6" y="3" width="2" height="2" fill="#C8C0F0"/><rect x="7" y="1" width="2" height="2" fill="#101070"/><rect x="8" y="3" width="1" height="1" fill="#101070"/><rect x="0" y="6" width="10" height="1" fill="#30307A"/></svg>
<div class="a" style="left:184px;top:336px;width:290px;height:15px;overflow:hidden">
<div class="t" style="left:0px;top:2px;letter-spacing:0px"></div></div>
<div class="t" style="left:477px;top:338px;letter-spacing:0px"></div>
<svg style="left:144px;top:356px" width="10" height="7" viewBox="0 0 10 7" shape-rendering="crispEdges"><rect x="0" y="0" width="10" height="7" fill="#5C5CAC"/><rect x="1" y="1" width="8" height="5" fill="#F4F0FF"/><rect x="2" y="2" width="4" height="3" fill="#8A88B8"/><rect x="6" y="3" width="2" height="2" fill="#C8C0F0"/><rect x="7" y="1" width="2" height="2" fill="#101070"/><rect x="8" y="3" width="1" height="1" fill="#101070"/><rect x="0" y="6" width="10" height="1" fill="#30307A"/></svg>
<div class="a" style="left:184px;top:351px;width:290px;height:15px;overflow:hidden">
<div class="t" style="left:0px;top:2px;letter-spacing:0px"></div></div>
<div class="t" style="left:477px;top:353px;letter-spacing:0px"></div>
<svg style="left:144px;top:371px" width="10" height="7" viewBox="0 0 10 7" shape-rendering="crispEdges"><rect x="0" y="0" width="10" height="7" fill="#5C5CAC"/><rect x="1" y="1" width="8" height="5" fill="#F4F0FF"/><rect x="2" y="2" width="4" height="3" fill="#8A88B8"/><rect x="6" y="3" width="2" height="2" fill="#C8C0F0"/><rect x="7" y="1" width="2" height="2" fill="#101070"/><rect x="8" y="3" width="1" height="1" fill="#101070"/><rect x="0" y="6" width="10" height="1" fill="#30307A"/></svg>
<div class="a" style="left:184px;top:366px;width:290px;height:15px;overflow:hidden">
<div class="t" style="left:0px;top:2px;letter-spacing:0px"></div></div>
<div class="t" style="left:477px;top:368px;letter-spacing:0px"></div>
<svg style="left:144px;top:386px" width="10" height="7" viewBox="0 0 10 7" shape-rendering="crispEdges"><rect x="0" y="0" width="10" height="7" fill="#5C5CAC"/><rect x="1" y="1" width="8" height="5" fill="#F4F0FF"/><rect x="2" y="2" width="4" height="3" fill="#8A88B8"/><rect x="6" y="3" width="2" height="2" fill="#C8C0F0"/><rect x="7" y="1" width="2" height="2" fill="#101070"/><rect x="8" y="3" width="1" height="1" fill="#101070"/><rect x="0" y="6" width="10" height="1" fill="#30307A"/></svg>
<div class="a" style="left:184px;top:381px;width:290px;height:15px;overflow:hidden">
<div class="t" style="left:0px;top:2px;letter-spacing:0px"></div></div>
<div class="t" style="left:477px;top:383px;letter-spacing:0px"></div>
<svg style="left:144px;top:401px" width="10" height="7" viewBox="0 0 10 7" shape-rendering="crispEdges"><rect x="0" y="0" width="10" height="7" fill="#5C5CAC"/><rect x="1" y="1" width="8" height="5" fill="#F4F0FF"/><rect x="2" y="2" width="4" height="3" fill="#8A88B8"/><rect x="6" y="3" width="2" height="2" fill="#C8C0F0"/><rect x="7" y="1" width="2" height="2" fill="#101070"/><rect x="8" y="3" width="1" height="1" fill="#101070"/><rect x="0" y="6" width="10" height="1" fill="#30307A"/></svg>
<div class="a" style="left:184px;top:396px;width:290px;height:15px;overflow:hidden">
<div class="t" style="left:0px;top:2px;letter-spacing:0px"></div></div>
<div class="t" style="left:477px;top:398px;letter-spacing:0px"></div>
<svg style="left:144px;top:416px" width="10" height="7" viewBox="0 0 10 7" shape-rendering="crispEdges"><rect x="0" y="0" width="10" height="7" fill="#5C5CAC"/><rect x="1" y="1" width="8" height="5" fill="#F4F0FF"/><rect x="2" y="2" width="4" height="3" fill="#8A88B8"/><rect x="6" y="3" width="2" height="2" fill="#C8C0F0"/><rect x="7" y="1" width="2" height="2" fill="#101070"/><rect x="8" y="3" width="1" height="1" fill="#101070"/><rect x="0" y="6" width="10" height="1" fill="#30307A"/></svg>
<div class="a" style="left:184px;top:411px;width:290px;height:15px;overflow:hidden">
<div class="t" style="left:0px;top:2px;letter-spacing:0px"></div></div>
<div class="t" style="left:477px;top:413px;letter-spacing:0px"></div>
<div class="a" style="left:143px;top:477px;width:433px;height:17px;background:#F6F5F0;background:linear-gradient(180deg,#EEEDE6,#F8F7F3 30%,#F6F5F0 70%,#ECEAE2)"></div>
<div class="a" style="left:144px;top:478px;width:15px;height:15px;border-radius:2px;background:linear-gradient(135deg,#E6EEFC,#C6D6FA 60%,#B8CCF6);border:1px solid #fff;box-shadow:1px 1px 0 #B8C4DE"></div>
<svg style="left:144px;top:478px" width="15" height="15" viewBox="0 0 15 15" shape-rendering="crispEdges"><path d="M8.5 3.5 L5 7 L8.5 10.5" stroke="#4D6185" stroke-width="2" fill="none" shape-rendering="auto"/></svg>
<div class="a" style="left:5px;top:494px;width:571px;height:1px;background:#D8D5C8;"></div>
<div class="a" style="left:5px;top:495px;width:571px;height:15px;background:#ECE9D8;"></div>
<div class="t" style="left:9.8px;top:497px;">21 Items.</div>
<div class="win" style="left:151px;top:331px;width:468px;height:237px;border-radius:5px 4px 0 0;background:#0A3ACD">
<div class="tb"></div>
<div class="a" style="left:0;top:30px;bottom:0;width:3px;background:linear-gradient(90deg,#0831D9 0,#0831D9 1px,#166AEE 1px,#166AEE 2px,#0855DD 2px,#0855DD 3px,#0050E8 3px)"></div>
<div class="a" style="right:0;top:30px;bottom:0;width:4px;background:linear-gradient(270deg,#0022A8 0,#0022A8 1px,#0034C4 1px,#0034C4 2px,#0044DC 2px,#0044DC 3px,#0050E8 3px)"></div>
<div class="a" style="left:0;right:0;bottom:0;height:4px;background:linear-gradient(0deg,#0022A8 0,#0022A8 1px,#0034C4 1px,#0034C4 2px,#0044DC 2px,#0044DC 3px,#0050E8 3px)"></div>
<div class="ttl" style="left:25px">Media : Husky Planes</div>
<div class="btn x" style="left:441px"></div>
<svg style="left:441px;top:6px" width="21" height="21" viewBox="0 0 21 21"><path d="M6 6 L15 15 M15 6 L6 15" stroke="#fff" stroke-width="2.2" stroke-linecap="square"/></svg>
<div class="btn" style="left:418px"></div>
<div class="a" style="left:423px;top:11px;width:11px;height:11px;background:transparent;border:1px solid #fff;border-top:3px solid #fff"></div>
<div class="btn" style="left:395px"></div>
<div class="a" style="left:400px;top:19px;width:8px;height:3px;background:#fff;"></div>
</div>
<svg style="left:156px;top:339px" width="16" height="16" viewBox="0 0 16 16"><path d="M0.5 6 Q2 3 6 4 L7 8 L2 9 Z" fill="#F0F0FF"/><path d="M9 9 L15 4 L14 8 L9 14 Z" fill="#B8B8F0"/><circle cx="7.5" cy="3" r="2" fill="#C87850"/><circle cx="7.5" cy="1.3" r="1" fill="#E0E0FF"/><circle cx="7.5" cy="7.5" r="2.2" fill="#30B040"/><circle cx="7.5" cy="7.5" r=".9" fill="#E0FFE0"/><circle cx="4.5" cy="11.5" r="2.6" fill="#D8A838"/><circle cx="4.5" cy="11.5" r="1" fill="#FFF8D0"/><path d="M6 14 L10 10" stroke="#302060" stroke-width="1"/></svg>
<div class="a" style="left:154px;top:361px;width:461px;height:203px;background:#ECE9D8;"></div>
<div class="a" style="left:154px;top:361px;width:461px;height:1px;background:#FFFFFF;"></div>
<div class="a" style="left:154px;top:361px;width:1px;height:203px;background:#F4F8FF;"></div>
<div class="t" style="left:159.6px;top:364px;">File</div>
<div class="t" style="left:187.3px;top:364px;">Edit</div>
<div class="t" style="left:217.7px;top:364px;">Format</div>
<div class="t" style="left:263.5px;top:364px;">Message</div>
<div class="t" style="left:317.7px;top:364px;">Collaborate</div>
<div class="t" style="left:384.5px;top:364px;">View</div>
<div class="t" style="left:419px;top:364px;">Help</div>
<div class="a" style="left:154px;top:380px;width:461px;height:1px;background:#ACA899;"></div>
<div class="a" style="left:154px;top:381px;width:461px;height:1px;background:#FFFFFF;"></div>
<div class="a" style="left:155px;top:383px;width:2px;height:24px;background:#FFFFFF;"></div>
<div class="a" style="left:158px;top:383px;width:1px;height:24px;background:#ACA899;"></div>
<div class="a" style="left:155px;top:406px;width:4px;height:1px;background:#ACA899;"></div>
<div class="a" style="left:159px;top:383px;width:2px;height:24px;background:#FFFFFF;"></div>
<div class="a" style="left:162px;top:383px;width:1px;height:24px;background:#ACA899;"></div>
<div class="a" style="left:159px;top:406px;width:4px;height:1px;background:#ACA899;"></div>
<div class="a" style="left:240px;top:385px;width:1px;height:22px;background:#ACA899;"></div>
<div class="a" style="left:241px;top:385px;width:1px;height:22px;background:#FFFFFF;"></div>
<div class="a" style="left:321px;top:385px;width:1px;height:22px;background:#ACA899;"></div>
<div class="a" style="left:322px;top:385px;width:1px;height:22px;background:#FFFFFF;"></div>
<div class="a" style="left:426px;top:385px;width:1px;height:22px;background:#ACA899;"></div>
<div class="a" style="left:427px;top:385px;width:1px;height:22px;background:#FFFFFF;"></div>
<div class="a" style="left:154px;top:408px;width:461px;height:1px;background:#ACA899;"></div>
<div class="a" style="left:154px;top:409px;width:461px;height:1px;background:#FFFFFF;"></div>
<div class="a" style="left:154px;top:426px;width:461px;height:1px;background:#1A1A1A;"></div>
<svg style="left:170px;top:385px" width="16" height="17" viewBox="0 0 16 17" shape-rendering="crispEdges"><rect x="0" y="8" width="13" height="8" fill="#000"/><rect x="1" y="9" width="11" height="5" fill="#FFF6F6"/><rect x="3" y="11" width="5" height="1" fill="#7A9A8A"/><rect x="3" y="13" width="2" height="1" fill="#666"/><rect x="6" y="13" width="3" height="1" fill="#666"/><rect x="10" y="9" width="2" height="2" fill="#D01030"/><rect x="9" y="1" width="1" height="3" fill="#000"/><rect x="11" y="3" width="1" height="1" fill="#000"/><rect x="12" y="2" width="1" height="1" fill="#000"/><rect x="13" y="1" width="1" height="1" fill="#000"/><rect x="11" y="5" width="3" height="1" fill="#000"/></svg>
<svg style="left:191px;top:385px" width="17" height="16" viewBox="0 0 17 16" shape-rendering="crispEdges"><rect x="1" y="8" width="10" height="1" fill="#A8A698"/><rect x="1" y="8" width="1" height="7" fill="#A8A698"/><rect x="10" y="9" width="1" height="2" fill="#A8A698"/><rect x="2" y="11" width="3" height="1" fill="#A8A698"/><rect x="1" y="14" width="9" height="1" fill="#A8A698"/><rect x="2" y="15" width="10" height="1" fill="#FFFFFF"/><rect x="7" y="1" width="1" height="4" fill="#A8A698"/><rect x="8" y="3" width="6" height="1" fill="#A8A698"/><rect x="8" y="4" width="6" height="1" fill="#FFFFFF"/><rect x="14" y="4" width="1" height="1" fill="#A8A698"/><rect x="15" y="5" width="1" height="6" fill="#A8A698"/><rect x="12" y="11" width="3" height="1" fill="#A8A698"/><rect x="16" y="6" width="1" height="6" fill="#FFFFFF"/><rect x="12" y="12" width="4" height="1" fill="#FFFFFF"/></svg>
<svg style="left:215px;top:385px" width="18" height="16" viewBox="0 0 18 16" shape-rendering="crispEdges"><path d="M1 5 L4 2 L11 2 L11 15 L1 15 Z" fill="#000"/><path d="M2.5 5.5 L4.5 3.5 L9.5 3.5 L9.5 13.5 L2.5 13.5 Z" fill="#F2F2F2"/><rect x="12" y="1" width="1" height="3" fill="#000"/><rect x="14" y="3" width="1" height="1" fill="#000"/><rect x="15" y="2" width="1" height="1" fill="#000"/><rect x="16" y="1" width="1" height="1" fill="#000"/><rect x="14" y="5" width="3" height="1" fill="#000"/></svg>
<svg style="left:249px;top:386px" width="15" height="16" viewBox="0 0 15 16" shape-rendering="crispEdges"><rect x="1" y="1" width="10" height="1" fill="#A8A698"/><rect x="2" y="2" width="10" height="1" fill="#FFFFFF"/><rect x="12" y="1" width="1" height="1" fill="#A8A698"/><rect x="1" y="3" width="10" height="1" fill="#A8A698"/><rect x="2" y="4" width="10" height="1" fill="#FFFFFF"/><rect x="12" y="3" width="1" height="1" fill="#A8A698"/><rect x="1" y="6" width="12" height="1" fill="#A8A698"/><rect x="1" y="6" width="1" height="8" fill="#A8A698"/><rect x="2" y="7" width="11" height="1" fill="#FFFFFF"/><rect x="3" y="13" width="10" height="1" fill="#A8A698"/><rect x="12" y="10" width="1" height="4" fill="#A8A698"/><rect x="10" y="8" width="1" height="1" fill="#A8A698"/><rect x="12" y="8" width="1" height="1" fill="#A8A698"/><rect x="4" y="9" width="5" height="1" fill="#A8A698"/><rect x="4" y="11" width="4" height="1" fill="#A8A698"/><rect x="3" y="14" width="11" height="1" fill="#FFFFFF"/><rect x="13" y="10" width="1" height="4" fill="#FFFFFF"/></svg>
<svg style="left:275px;top:386px" width="12" height="16" viewBox="0 0 12 16" shape-rendering="crispEdges"><rect x="4" y="1" width="3" height="1" fill="#A8A698"/><rect x="1" y="2" width="9" height="2" fill="#A8A698"/><rect x="1" y="5" width="9" height="1" fill="#A8A698"/><rect x="1" y="5" width="1" height="9" fill="#A8A698"/><rect x="9" y="5" width="1" height="9" fill="#A8A698"/><rect x="1" y="13" width="9" height="1" fill="#A8A698"/><rect x="3" y="7" width="1" height="5" fill="#A8A698"/><rect x="5" y="7" width="1" height="5" fill="#A8A698"/><rect x="7" y="7" width="1" height="5" fill="#A8A698"/><rect x="2" y="14" width="9" height="1" fill="#FFFFFF"/><rect x="10" y="6" width="1" height="8" fill="#FFFFFF"/></svg>
<svg style="left:297px;top:386px" width="17" height="16" viewBox="0 0 17 16" shape-rendering="crispEdges"><rect x="1" y="1" width="5" height="1" fill="#A8A698"/><rect x="5" y="2" width="1" height="2" fill="#A8A698"/><rect x="1" y="4" width="5" height="1" fill="#A8A698"/><rect x="1" y="6" width="1" height="5" fill="#A8A698"/><rect x="1" y="7" width="5" height="1" fill="#A8A698"/><rect x="5" y="8" width="1" height="2" fill="#A8A698"/><rect x="1" y="10" width="5" height="1" fill="#A8A698"/><rect x="1" y="12" width="5" height="1" fill="#A8A698"/><rect x="5" y="13" width="1" height="1" fill="#A8A698"/><rect x="8" y="4" width="7" height="6" fill="#A8A698"/><rect x="9" y="5" width="5" height="4" fill="#ECE9D8"/><rect x="10" y="7" width="3" height="1" fill="#A8A698"/><rect x="9" y="10" width="7" height="1" fill="#FFFFFF"/></svg>
<svg style="left:330px;top:388px" width="17" height="12" viewBox="0 0 17 12" shape-rendering="crispEdges"><rect x="0" y="0" width="6" height="1" fill="#A8A698"/><rect x="5" y="0" width="1" height="5" fill="#A8A698"/><rect x="0" y="0" width="1" height="9" fill="#A8A698"/><rect x="1" y="4" width="4" height="1" fill="#FFFFFF"/><rect x="1" y="9" width="1" height="1" fill="#FFFFFF"/><rect x="6" y="1" width="1" height="5" fill="#FFFFFF"/><rect x="9" y="2" width="1" height="6" fill="#A8A698"/><rect x="10" y="2" width="1" height="6" fill="#FFFFFF"/><path d="M10 9 L12 6.5" stroke="#FFFFFF" stroke-width="1.2" shape-rendering="auto"/></svg>
<svg style="left:352px;top:385px" width="17" height="16" viewBox="0 0 17 16" shape-rendering="crispEdges"><rect x="8" y="1" width="6" height="1" fill="#A8A698"/><rect x="8" y="1" width="1" height="5" fill="#A8A698"/><rect x="10" y="3" width="3" height="1" fill="#A8A698"/><rect x="9" y="5" width="6" height="1" fill="#A8A698"/><rect x="14" y="4" width="1" height="2" fill="#A8A698"/><rect x="9" y="2" width="5" height="1" fill="#FFFFFF"/><rect x="10" y="6" width="6" height="1" fill="#FFFFFF"/><rect x="15" y="4" width="1" height="3" fill="#FFFFFF"/><rect x="8" y="9" width="6" height="1" fill="#A8A698"/><rect x="8" y="9" width="1" height="5" fill="#A8A698"/><rect x="10" y="11" width="3" height="1" fill="#A8A698"/><rect x="9" y="13" width="6" height="1" fill="#A8A698"/><rect x="14" y="12" width="1" height="2" fill="#A8A698"/><rect x="9" y="10" width="5" height="1" fill="#FFFFFF"/><rect x="10" y="14" width="6" height="1" fill="#FFFFFF"/><rect x="15" y="12" width="1" height="3" fill="#FFFFFF"/><path d="M1.5 7 Q3.5 6.5 5 4" stroke="#A8A698" stroke-width="1.3" fill="none" shape-rendering="auto"/></svg>
<svg style="left:377px;top:385px" width="17" height="16" viewBox="0 0 17 16" shape-rendering="crispEdges"><rect x="1" y="1" width="6" height="1" fill="#A8A698"/><rect x="1" y="1" width="1" height="5" fill="#A8A698"/><rect x="3" y="3" width="3" height="1" fill="#A8A698"/><rect x="2" y="5" width="6" height="1" fill="#A8A698"/><rect x="7" y="4" width="1" height="2" fill="#A8A698"/><rect x="2" y="2" width="5" height="1" fill="#FFFFFF"/><rect x="3" y="6" width="6" height="1" fill="#FFFFFF"/><rect x="8" y="4" width="1" height="3" fill="#FFFFFF"/><rect x="1" y="9" width="6" height="1" fill="#A8A698"/><rect x="1" y="9" width="1" height="5" fill="#A8A698"/><rect x="3" y="11" width="3" height="1" fill="#A8A698"/><rect x="2" y="13" width="6" height="1" fill="#A8A698"/><rect x="7" y="12" width="1" height="2" fill="#A8A698"/><rect x="2" y="10" width="5" height="1" fill="#FFFFFF"/><rect x="3" y="14" width="6" height="1" fill="#FFFFFF"/><rect x="8" y="12" width="1" height="3" fill="#FFFFFF"/><rect x="11" y="5" width="1" height="6" fill="#A8A698"/><rect x="12" y="5" width="1" height="6" fill="#FFFFFF"/><path d="M13 12 L16 8.5" stroke="#FFFFFF" stroke-width="1.3" shape-rendering="auto"/></svg>
<svg style="left:401px;top:387px" width="17" height="13" viewBox="0 0 17 13" shape-rendering="crispEdges"><path d="M1 3 L3 1 L7 1 L8 3 L15 3 L15 12 L1 12 Z" fill="#000"/><path d="M2 3.6 L3.5 2 L6.5 2 L7.5 4 L14 4 L14 11 L2 11 Z" fill="#F4F4C8"/><rect x="2" y="8" width="12" height="3" fill="#E4E88A"/><rect x="2" y="4" width="2" height="7" fill="#E4E88A"/><rect x="5" y="4" width="1" height="5" fill="#000"/><rect x="4" y="5" width="3" height="1" fill="#000"/><rect x="5" y="8" width="7" height="1" fill="#000"/><rect x="2" y="12" width="14" height="1" fill="#55553A" opacity=".6"/></svg>
<svg style="left:434px;top:386px" width="18" height="16" viewBox="0 0 18 16"><rect x="2" y="0" width="2" height="6" fill="#A8A698" shape-rendering="crispEdges"/><rect x="0" y="2" width="6" height="2" fill="#A8A698" shape-rendering="crispEdges"/><ellipse cx="13" cy="4.5" rx="3.8499999999999996" ry="1.8199999999999998" fill="#C8C6BA" stroke="#A8A698" stroke-width="0.77"/><circle cx="10.55" cy="2.68" r="0.84" fill="none" stroke="#A8A698" stroke-width="0.48999999999999994"/><circle cx="13.0" cy="2.68" r="0.84" fill="none" stroke="#A8A698" stroke-width="0.48999999999999994"/><circle cx="15.45" cy="2.68" r="0.84" fill="none" stroke="#A8A698" stroke-width="0.48999999999999994"/><ellipse cx="5.5" cy="12" rx="5.5" ry="2.6" fill="#C8C6BA" stroke="#A8A698" stroke-width="1.1"/><circle cx="2.0" cy="9.4" r="1.2" fill="none" stroke="#A8A698" stroke-width="0.7"/><circle cx="5.5" cy="9.4" r="1.2" fill="none" stroke="#A8A698" stroke-width="0.7"/><circle cx="9.0" cy="9.4" r="1.2" fill="none" stroke="#A8A698" stroke-width="0.7"/><path d="M12 14 L14 14 L14 10 M13 9.5 L14 8.5 L15 9.5" stroke="#A8A698" stroke-width="1" fill="none"/></svg>
<svg style="left:458px;top:386px" width="18" height="16" viewBox="0 0 18 16"><ellipse cx="6.5" cy="7" rx="6.324999999999999" ry="2.9899999999999998" fill="#C8C6BA" stroke="#A8A698" stroke-width="1.265"/><circle cx="2.4750000000000005" cy="4.01" r="1.38" fill="none" stroke="#A8A698" stroke-width="0.8049999999999999"/><circle cx="6.5" cy="4.01" r="1.38" fill="none" stroke="#A8A698" stroke-width="0.8049999999999999"/><circle cx="10.524999999999999" cy="4.01" r="1.38" fill="none" stroke="#A8A698" stroke-width="0.8049999999999999"/><circle cx="13.5" cy="10.5" r="2.2" fill="#A8A698"/><rect x="12.7" y="12" width="1.6" height="4" fill="#A8A698"/><rect x="14" y="14" width="1.5" height="1" fill="#A8A698"/></svg>
<svg style="left:483px;top:385px" width="17" height="17" viewBox="0 0 17 17"><path d="M2.3 15.2 L7.5 10" stroke="#000" stroke-width="3.8" stroke-linecap="round"/><path d="M2.3 15.2 L7.5 10" stroke="#E8D050" stroke-width="1.8" stroke-linecap="round"/><circle cx="10.8" cy="6.2" r="4.6" fill="#C8E8F8" stroke="#000" stroke-width="1.3"/><circle cx="9.8" cy="5.2" r="1.6" fill="#fff" opacity=".8"/></svg>
<svg style="left:508px;top:385px" width="17" height="17" viewBox="0 0 17 17"><circle cx="6.8" cy="11" r="5.5" fill="none" stroke="#A8A698" stroke-width="1"/><path d="M6 8 L6.5 8 M5.5 10 L7 10 L7 14" stroke="#A8A698" stroke-width="1.2" fill="none"/><ellipse cx="11.5" cy="3.2" rx="3.0250000000000004" ry="1.4300000000000002" fill="#C8C6BA" stroke="#A8A698" stroke-width="0.6050000000000001"/><circle cx="9.575" cy="1.77" r="0.66" fill="none" stroke="#A8A698" stroke-width="0.385"/><circle cx="11.5" cy="1.77" r="0.66" fill="none" stroke="#A8A698" stroke-width="0.385"/><circle cx="13.425" cy="1.77" r="0.66" fill="none" stroke="#A8A698" stroke-width="0.385"/></svg>
<svg style="left:161px;top:414px" width="14" height="10" viewBox="0 0 14 10" shape-rendering="crispEdges"><path d="M0 1 L1 0 L5 0 L6 1 L13 1 L13 9 L0 9 Z" fill="#4A4A5A"/><rect x="1" y="2" width="11" height="6" fill="#A8A8B4"/><rect x="1" y="2" width="11" height="1" fill="#C8C8D0"/></svg>
<div class="t" style="left:180px;top:412px;">Folder</div>
<div class="t" style="left:219.7px;top:412px;">3 Files</div>
<div class="t" style="left:255.7px;top:412px;">0 Folders</div>
<div class="t" style="left:310.6px;top:412px;">Husky Planes : Michael Green</div>
<div class="a" style="left:464px;top:412px;width:100px;height:13px;background:#E6E6EE;border:1px solid #F8F8FC"></div>
<div class="a" style="left:465px;top:413px;width:4px;height:11px;background:#C8C6E8;"></div>
<div class="t" style="left:490px;top:412px;letter-spacing:-0.35px">4.7M Free</div>
<svg style="left:583px;top:413px" width="9" height="11" viewBox="0 0 9 11"><path d="M0.8 10.2 L1.2 7 L5.6 1.2 Q6.6 0.2 7.6 1 L8.2 1.6 Q8.8 2.6 8 3.5 L3.8 9.2 Z" fill="#EEE070" stroke="#000" stroke-width="1.1" stroke-linejoin="round"/><path d="M2.6 7.6 L6.6 2.4" stroke="#303000" stroke-width=".8" stroke-dasharray="1 1"/></svg>
<svg style="left:595px;top:413px" width="17" height="13" viewBox="0 0 17 13"><path d="M8.8 10.2 L9.2 7 L13.6 1.2 Q14.6 0.2 15.6 1 L16.2 1.6 Q16.8 2.6 16 3.5 L11.8 9.2 Z" fill="#EEE070" stroke="#000" stroke-width="1.1" stroke-linejoin="round"/><path d="M10.6 7.6 L14.6 2.4" stroke="#303000" stroke-width=".8" stroke-dasharray="1 1"/><ellipse cx="3" cy="10" rx="2.6" ry="2.4" fill="#F09018"/><rect x="4" y="8.8" width="7" height="2.4" fill="#E88A10"/><rect x="7.5" y="10.5" width="2" height="2.5" fill="#E88A10"/><circle cx="2.8" cy="9.6" r=".9" fill="#FFE0A0"/></svg>
<div class="a" style="left:154px;top:427px;width:461px;height:105px;background:#FFFFFF;"></div>
<div class="hdr" style="left:154px;top:427px;width:16px"></div>
<div class="hdr" style="left:170px;top:427px;width:12px"></div>
<div class="hdr" style="left:182px;top:427px;width:12px"></div>
<div class="hdr" style="left:194px;top:427px;width:191px"></div>
<div class="hdr" style="left:385px;top:427px;width:40px"></div>
<div class="hdr" style="left:425px;top:427px;width:120px"></div>
<div class="hdr" style="left:545px;top:427px;width:70px"></div>
<svg style="left:156px;top:431px" width="10" height="7" viewBox="0 0 10 7" shape-rendering="crispEdges"><rect x="0" y="0" width="10" height="7" fill="#5C5CAC"/><rect x="1" y="1" width="8" height="5" fill="#F4F0FF"/><rect x="2" y="2" width="4" height="3" fill="#8A88B8"/><rect x="6" y="3" width="2" height="2" fill="#C8C0F0"/><rect x="7" y="1" width="2" height="2" fill="#101070"/><rect x="8" y="3" width="1" height="1" fill="#101070"/><rect x="0" y="6" width="10" height="1" fill="#30307A"/></svg>
<svg style="left:171px;top:430px" width="7" height="9" viewBox="0 0 7 9" shape-rendering="crispEdges"><rect x="0" y="0" width="7" height="4" fill="#E8000C"/><rect x="0" y="0" width="1" height="9" fill="#A0000A"/></svg>
<svg style="left:184px;top:428px" width="8" height="13" viewBox="0 0 8 13"><rect x="0.7" y="0.7" width="5.6" height="11.3" rx="2.6" fill="none" stroke="#10108C" stroke-width="1.4"/><path d="M3.5 2 L3.5 7.5 M1.8 7.8 Q3.5 10 5.2 7.8" stroke="#10108C" stroke-width="1.2" fill="none"/></svg>
<div class="t" style="left:195px;top:428px;">Name</div>
<div class="t" style="left:385px;top:428px;width:39px;text-align:right">Size</div>
<div class="t" style="left:427px;top:428px;">Last Modified</div>
<div class="t" style="left:547px;top:428px;">Subject</div>
<svg style="left:532px;top:429px" width="12" height="11" viewBox="0 0 12 11" shape-rendering="crispEdges"><rect x="0" y="0" width="11" height="1" fill="#000"/><rect x="4" y="2" width="6" height="1" fill="#000"/><rect x="6" y="4" width="4" height="1" fill="#000"/><rect x="7" y="6" width="3" height="1" fill="#000"/><rect x="8" y="8" width="2" height="1" fill="#000"/><rect x="9" y="9" width="1" height="2" fill="#000"/><rect x="10" y="0" width="1" height="11" fill="#000"/></svg>
<svg style="left:156px;top:443px" width="11" height="13" viewBox="0 0 11 13"><defs><linearGradient id="dg" x1="0" y1="0" x2="1" y2="1"><stop offset="0" stop-color="#E4E0FA"/><stop offset="1" stop-color="#B8B0F0"/></linearGradient></defs><path d="M0.6 0.6 L6.6 0.6 L9.4 3.4 L9.4 11.4 L0.6 11.4 Z" fill="url(#dg)" stroke="#5048B0" stroke-width="1.2" stroke-linejoin="miter"/><path d="M1 11.5 L10 11.5" stroke="#3A3290" stroke-width="1"/></svg>
<div class="t" style="left:195px;top:443px;">Brochures</div>
<div class="t" style="left:374px;top:443px;width:50px;text-align:right">167K</div>
<div class="t" style="left:427px;top:443px;">12/12/2005</div>
<div class="t" style="left:488px;top:443px;">11:36 AM</div>
<svg style="left:156px;top:458px" width="11" height="13" viewBox="0 0 11 13"><defs><linearGradient id="dg" x1="0" y1="0" x2="1" y2="1"><stop offset="0" stop-color="#E4E0FA"/><stop offset="1" stop-color="#B8B0F0"/></linearGradient></defs><path d="M0.6 0.6 L6.6 0.6 L9.4 3.4 L9.4 11.4 L0.6 11.4 Z" fill="url(#dg)" stroke="#5048B0" stroke-width="1.2" stroke-linejoin="miter"/><path d="M1 11.5 L10 11.5" stroke="#3A3290" stroke-width="1"/></svg>
<div class="t" style="left:195px;top:458px;">Booth signs</div>
<div class="t" style="left:374px;top:458px;width:50px;text-align:right">256K</div>
<div class="t" style="left:427px;top:458px;">12/12/2005</div>
<div class="t" style="left:488px;top:458px;">11:38 AM</div>
<svg style="left:156px;top:473px" width="11" height="13" viewBox="0 0 11 13"><defs><linearGradient id="dg" x1="0" y1="0" x2="1" y2="1"><stop offset="0" stop-color="#E4E0FA"/><stop offset="1" stop-color="#B8B0F0"/></linearGradient></defs><path d="M0.6 0.6 L6.6 0.6 L9.4 3.4 L9.4 11.4 L0.6 11.4 Z" fill="url(#dg)" stroke="#5048B0" stroke-width="1.2" stroke-linejoin="miter"/><path d="M1 11.5 L10 11.5" stroke="#3A3290" stroke-width="1"/></svg>
<div class="t" style="left:195px;top:473px;">Giveaways</div>
<div class="t" style="left:374px;top:473px;width:50px;text-align:right">1K</div>
<div class="t" style="left:427px;top:473px;">12/8/2005</div>
<div class="t" style="left:481px;top:473px;">2:21 PM</div>
<div class="a" style="left:154px;top:531px;width:461px;height:17px;background:#F6F5F0;background:linear-gradient(180deg,#EEEDE6,#F8F7F3 30%,#F6F5F0 70%,#ECEAE2)"></div>
<div class="a" style="left:155px;top:532px;width:15px;height:15px;border-radius:2px;background:linear-gradient(135deg,#E6EEFC,#C6D6FA 60%,#B8CCF6);border:1px solid #fff;box-shadow:1px 1px 0 #B8C4DE"></div>
<svg style="left:155px;top:532px" width="15" height="15" viewBox="0 0 15 15" shape-rendering="crispEdges"><path d="M8.5 3.5 L5 7 L8.5 10.5" stroke="#4D6185" stroke-width="2" fill="none" shape-rendering="auto"/></svg>
<div class="a" style="left:172px;top:532px;width:16px;height:15px;border-radius:2px;background:linear-gradient(135deg,#D8E4FC,#C2D4FA 60%,#B4C8F4);border:1px solid #fff;box-shadow:1px 1px 0 #B8C4DE"></div>
<svg style="left:172px;top:532px" width="16" height="15" viewBox="0 0 16 15" shape-rendering="crispEdges"><rect x="5" y="4" width="1" height="6" fill="#98AEE0"/><rect x="7" y="4" width="1" height="6" fill="#98AEE0"/><rect x="9" y="4" width="1" height="6" fill="#98AEE0"/><rect x="11" y="4" width="1" height="6" fill="#98AEE0"/></svg>
<div class="a" style="left:599px;top:532px;width:15px;height:15px;border-radius:2px;background:linear-gradient(135deg,#E6EEFC,#C6D6FA 60%,#B8CCF6);border:1px solid #fff;box-shadow:1px 1px 0 #B8C4DE"></div>
<svg style="left:599px;top:532px" width="15" height="15" viewBox="0 0 15 15" shape-rendering="crispEdges"><path d="M5.5 3.5 L9 7 L5.5 10.5" stroke="#4D6185" stroke-width="2" fill="none" shape-rendering="auto"/></svg>
<div class="a" style="left:154px;top:548px;width:461px;height:16px;background:#ECE9D8;"></div>
<div class="t" style="left:159px;top:551px;">3 Items.</div>
</body></html>
